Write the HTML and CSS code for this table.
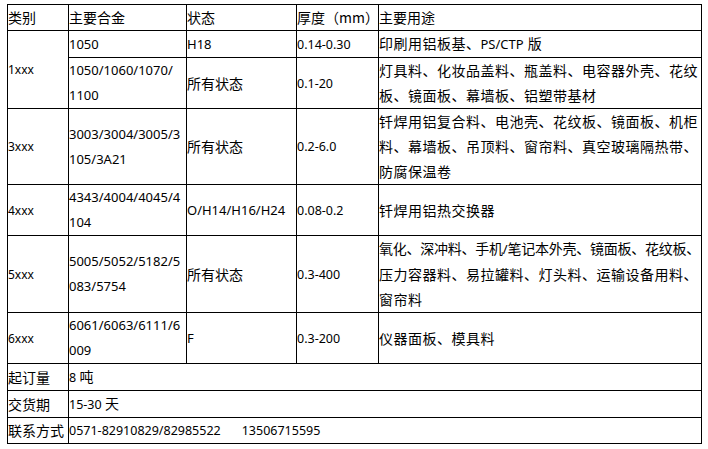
FILE: index.html
```html
<!DOCTYPE html>
<html lang="zh-CN">
<head>
<meta charset="utf-8">
<title>铝板规格</title>
<link rel="stylesheet" href="styles.css">
</head>
<body>
<table class="spec">
  <colgroup>
    <col class="c-type">
    <col class="c-alloy">
    <col class="c-temper">
    <col class="c-thick">
    <col class="c-use">
  </colgroup>
  <tr class="head">
    <td class="cjk">类别</td>
    <td class="cjk">主要合金</td>
    <td class="cjk">状态</td>
    <td class="cjk">厚度（mm）</td>
    <td class="cjk">主要用途</td>
  </tr>
  <tr>
    <td class="type" rowspan="2">1xxx</td>
    <td class="num">1050</td>
    <td class="num">H18</td>
    <td class="thick">0.14-0.30</td>
    <td class="use wide">印刷用铝板基、<span class="latin">PS/CTP</span> 版</td>
  </tr>
  <tr>
    <td class="num">1050/1060/1070/<br>1100</td>
    <td class="cjk">所有状态</td>
    <td class="thick">0.1-20</td>
    <td class="use wide">灯具料、化妆品盖料、瓶盖料、电容器外壳、花纹<br>板、镜面板、幕墙板、铝塑带基材</td>
  </tr>
  <tr>
    <td class="type">3xxx</td>
    <td class="num">3003/3004/3005/3<br>105/3A21</td>
    <td class="cjk">所有状态</td>
    <td class="thick">0.2-6.0</td>
    <td class="use wide">钎焊用铝复合料、电池壳、花纹板、镜面板、机柜<br>料、幕墙板、吊顶料、窗帘料、真空玻璃隔热带、<br>防腐保温卷</td>
  </tr>
  <tr>
    <td class="type">4xxx</td>
    <td class="num">4343/4004/4045/4<br>104</td>
    <td class="num">O/H14/H16/H24</td>
    <td class="thick">0.08-0.2</td>
    <td class="use wide">钎焊用铝热交换器</td>
  </tr>
  <tr>
    <td class="type">5xxx</td>
    <td class="num">5005/5052/5182/5<br>083/5754</td>
    <td class="cjk">所有状态</td>
    <td class="thick">0.3-400</td>
    <td class="use wide"><span class="tight">氧化、深冲料、手机<span class="latin">/</span>笔记本外壳、镜面板、花纹板、</span><br>压力容器料、易拉罐料、灯头料、运输设备用料、<br>窗帘料</td>
  </tr>
  <tr>
    <td class="type">6xxx</td>
    <td class="num">6061/6063/6111/6<br>009</td>
    <td class="num">F</td>
    <td class="thick">0.3-200</td>
    <td class="use wide">仪器面板、模具料</td>
  </tr>
  <tr>
    <td class="cjk">起订量</td>
    <td class="value" colspan="4">8 <span class="cjk-in">吨</span></td>
  </tr>
  <tr>
    <td class="cjk">交货期</td>
    <td class="value" colspan="4">15-30 <span class="cjk-in">天</span></td>
  </tr>
  <tr>
    <td class="cjk">联系方式</td>
    <td class="value" colspan="4">0571-82910829/82985522<span class="gap"></span>13506715595</td>
  </tr>
</table>
</body>
</html>
```

FILE: styles.css
```css
html, body {
  margin: 0;
  padding: 0;
  background: #ffffff;
}

body {
  font-family: "Noto Sans", "Noto Sans CJK SC", sans-serif;
  color: #000000;
}

.spec {
  border-collapse: collapse;
  table-layout: fixed;
  width: 695px;
  margin: 4px 0 0 7px;
}

.c-type { width: 61px; }
.c-alloy { width: 118px; }
.c-temper { width: 110px; }
.c-thick { width: 82px; }
.c-use { width: 323px; }

.spec td {
  border: 1px solid #000000;
  padding: 0;
  line-height: 25px;
  vertical-align: middle;
  text-align: left;
  white-space: nowrap;
  overflow: visible;
  font-size: 13px;
}

.spec td.cjk {
  font-family: "Noto Sans CJK SC", sans-serif;
  font-size: 14px;
}

.spec td.type {
  font-size: 12px;
}

.spec td.num {
  font-size: 13px;
}

.spec td.thick {
  font-size: 12.5px;
}

.spec td.use {
  font-family: "Noto Sans", "Noto Sans CJK SC", sans-serif;
  font-size: 14px;
}

.spec td.wide {
  letter-spacing: 0.5px;
}

.tight {
  letter-spacing: -0.25px;
}

.latin {
  font-family: "Noto Sans", sans-serif;
  font-size: 13px;
  letter-spacing: 0;
}

.spec td.value {
  font-size: 12.5px;
}

.cjk-in {
  font-family: "Noto Sans CJK SC", sans-serif;
  font-size: 14px;
}

.gap {
  display: inline-block;
  width: 21px;
}
```
